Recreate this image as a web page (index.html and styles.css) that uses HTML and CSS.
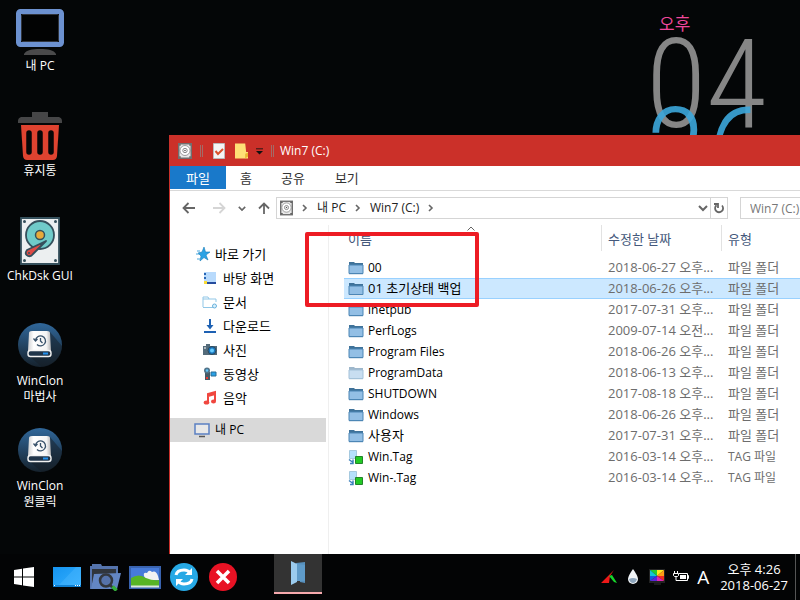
FILE: index.html
```html
<!DOCTYPE html>
<html lang="ko">
<head>
<meta charset="utf-8">
<meta name="viewport" content="width=device-width, initial-scale=1">
<title>Win7 (C:)</title>
<link rel="stylesheet" href="styles.css">
</head>
<body>
<svg class="defs" aria-hidden="true">
  <defs>
    <linearGradient id="g-clon" x1="0" y1="0" x2="0" y2="1"><stop offset="0" stop-color="#30679a"/><stop offset="1" stop-color="#16222d"/></linearGradient>
    <linearGradient id="g-disk" x1="0" y1="0" x2="1" y2="0"><stop offset="0" stop-color="#cfd0d2"/><stop offset=".25" stop-color="#fff"/><stop offset=".8" stop-color="#f4f4f4"/><stop offset="1" stop-color="#b5b5b7"/></linearGradient>
    <linearGradient id="g-desk" x1="0" y1="0" x2="1" y2="1"><stop offset="0" stop-color="#1594f0"/><stop offset="1" stop-color="#35b0ff"/></linearGradient>
  </defs>
  <symbol id="folder" viewBox="0 0 16 14">
    <path d="M1 2V1h5l1 1h8v2H1z" fill="#3f7299"/>
    <path d="M1 4h14v8.500H1z" fill="#93bfe5" stroke="#4c86b5"/>
    <path d="M1 13.500h14" stroke="#dbe6ef"/>
  </symbol>
  <symbol id="tag" viewBox="0 0 16 16">
    <path d="M1.500 1.500h7v8h-7z" fill="#b5e0fc" stroke="#a5c9df"/>
    <path d="M7.500 7.500h7v7h-7z" fill="#22c925" stroke="#23832a"/>
    <path d="M1 10.500l4 3M5 10.500v4H2" fill="none" stroke="#3f83bd" stroke-width="1.500"/>
  </symbol>
  <symbol id="drive" viewBox="0 0 14 16">
    <path d="M0 0h14v16H0z" fill="#6f6f6f"/>
    <path d="M1.500 1.500h11v13h-11z" fill="#e9e9e9"/>
    <circle cx="7" cy="7.500" r="5" fill="#fff" stroke="#777" stroke-width=".7"/>
    <circle cx="7" cy="7.500" r="2.200" fill="none" stroke="#888"/>
    <circle cx="7" cy="7.500" r=".8" fill="#555"/>
    <path d="M1 2h2M11 2h2M1 14h2M11 14h2" stroke="#555"/>
  </symbol>
  <symbol id="chev" viewBox="0 0 6 8"><path d="M1 1l3 3-3 3" fill="none" stroke="#666" stroke-width="1.600"/></symbol>
  <symbol id="chev-down" viewBox="0 0 10 8"><path d="M1 2l4 4 4-4" fill="none" stroke="#666" stroke-width="2"/></symbol>
  <symbol id="winclon" viewBox="0 0 48 48">
    <circle cx="24" cy="22" r="22" fill="url(#g-clon)"/>
    <path d="M34 9l12 14c0 10-8 20-20 21L13 33z" fill="#151d26" opacity=".5"/>
    <path d="M16 8h15q3 0 3 2l1 18H12l1-18q0-2 3-2z" fill="url(#g-disk)"/>
    <rect x="12" y="27.500" width="23" height="6" rx="2.500" fill="#20354a" stroke="#f2f2f2" stroke-width="1.400"/>
    <path d="M27 30.500h5" stroke="#2492ee" stroke-width="2"/>
    <path d="M19.500 17.500a5 5 0 1 1 1.500 4M24.500 15V18l2 2M17.500 15.500l2 2.500 2-2" fill="none" stroke="#365069" stroke-width="1.300"/>
  </symbol>
</svg>

<main class="desktop">
  <nav class="shortcuts" aria-label="바탕 화면">
    <a class="shortcut" href="#">
      <svg class="pic" viewBox="0 0 48 48"><rect x="2.500" y="3.500" width="43" height="33" rx="2" fill="#020303" stroke="#6c91d0" stroke-width="5"/><rect x="5.500" y="6.500" width="37" height="27" rx="1" fill="none" stroke="#30343c"/><path d="M8 46c2-4 8-5 16-5s14 1 16 5v1H8z" fill="#4a4a4b"/></svg>
      <span>내 PC</span>
    </a>
    <a class="shortcut" href="#">
      <svg class="pic" viewBox="0 0 48 48"><path d="M2 10V8q0-3 3-4h11V-1h16v5h11q3 1 3 4v2z" fill="#464647"/><path d="M5 12h38l-2 31q-.5 4-4 4H11q-3.500 0-4-4z" fill="#df4330"/><path d="M13 20v19M24 20v19M35 20v19" stroke="#060708" stroke-width="5.500" stroke-linecap="round"/></svg>
      <span>휴지통</span>
    </a>
    <a class="shortcut" href="#">
      <svg class="pic" viewBox="0 0 48 48"><path d="M5 0h38v46H5z" fill="#eceff0" stroke="#35505c" stroke-width="1.800"/><circle cx="24" cy="17" r="14" fill="#70cbc9" stroke="#35505c" stroke-width="1.800"/><circle cx="24" cy="17" r="4.500" fill="#e8aa3a" stroke="#35505c" stroke-width="1.500"/><path d="M30 23L11 32q-3 4 1 6 3 1 5-2z" fill="#df4b45" stroke="#35505c" stroke-width="1.800" stroke-linejoin="round"/><circle cx="13" cy="35" r="1" fill="#35505c"/><g fill="#35505c"><circle cx="8.500" cy="3.500" r="1.500"/><circle cx="39.500" cy="3.500" r="1.500"/><circle cx="8.500" cy="42.500" r="1.500"/><circle cx="39.500" cy="42.500" r="1.500"/></g></svg>
      <span>ChkDsk GUI</span>
    </a>
    <a class="shortcut" href="#"><svg class="pic"><use href="#winclon"/></svg><span>WinClon<br>마법사</span></a>
    <a class="shortcut" href="#"><svg class="pic"><use href="#winclon"/></svg><span>WinClon<br>원클릭</span></a>
  </nav>

  <div class="clock">
    <span class="clock-half">오후</span>
    <span class="clock-hour">04</span>
    <span class="clock-minute">26</span>
  </div>

  <section class="window">
    <header class="titlebar">
      <svg class="t-drive"><use href="#drive"/></svg>
      <i class="bar"></i>
      <svg class="t-doc" viewBox="0 0 12 16"><path d="M.5.500h11v15H.5z" fill="#f5f5f5" stroke="#bbb"/><path d="M2.500 8L5 11l5-5" fill="none" stroke="#d9532c" stroke-width="2"/></svg>
      <svg class="t-folder" viewBox="0 0 14 16"><path d="M0 0h11l1 9h2v7H0z" fill="#ffdf76"/><path d="M11 11l3-1v4l-3 2z" fill="#e9b52f"/></svg>
      <svg class="t-menu" viewBox="0 0 8 8"><path d="M0 1.500h8" stroke="#111"/><path d="M0 4h8L4 8z" fill="#111"/></svg>
      <i class="bar"></i>
      <h1>Win7 (C:)</h1>
    </header>
    <div class="tabs">
      <button class="tab tab-file" type="button">파일</button>
      <button class="tab" type="button">홈</button>
      <button class="tab" type="button">공유</button>
      <button class="tab" type="button">보기</button>
    </div>
    <div class="navbar">
      <div class="arrows">
        <button type="button" aria-label="뒤로"><svg viewBox="0 0 14 12"><path d="M13 6H2M6.500 1L1.500 6l5 5" fill="none" stroke="#666" stroke-width="1.800"/></svg></button>
        <button type="button" aria-label="앞으로"><svg viewBox="0 0 14 12"><path d="M1 6h11M7.500 1l5 5-5 5" fill="none" stroke="#d5d5d5" stroke-width="1.800"/></svg></button>
        <button class="recent" type="button" aria-label="최근 위치"><svg viewBox="0 0 10 8"><use href="#chev-down"/></svg></button>
        <button type="button" aria-label="위로"><svg viewBox="0 0 12 12"><path d="M6 12V2M1 6.500l5-5 5 5" fill="none" stroke="#666" stroke-width="1.800"/></svg></button>
      </div>
      <div class="address">
        <svg class="a-drive"><use href="#drive"/></svg>
        <svg class="chev"><use href="#chev"/></svg>
        <a href="#">내 PC</a>
        <svg class="chev"><use href="#chev"/></svg>
        <a href="#">Win7 (C:)</a>
        <svg class="chev"><use href="#chev"/></svg>
        <button class="drop" type="button" aria-label="이전 위치"><svg viewBox="0 0 10 8"><use href="#chev-down"/></svg></button>
        <button class="reload" type="button" aria-label="새로 고침"><svg viewBox="0 0 12 12"><path d="M9 3.500a4 4 0 1 1-5.500-.3M1 2h4v4" fill="none" stroke="#666" stroke-width="1.800"/></svg></button>
      </div>
      <input class="search" type="search" aria-label="검색" placeholder="Win7 (C:) 검색">
    </div>
    <div class="content">
      <nav class="side" aria-label="탐색">
        <a class="side-item top" href="#"><svg viewBox="0 0 16 16"><path d="M9 1l1.500 5L15 6l-4 3 2 5-4-2.500L5 15l1-5-3-3 4-1z" fill="#2ba2e4" stroke="#187cb9" stroke-width=".6"/><path d="M2 5h3M1 8h3M2 13h3" stroke="#4aa7dc"/></svg>바로 가기</a>
        <a class="side-item" href="#"><svg viewBox="0 0 16 16"><path d="M2 2h12v10H2z" fill="#b8dafc"/><path d="M2 12h12v2H2z" fill="#244b9d"/><path d="M2 3h2v2H2zM2 7h2v2H2z" fill="#2765b5"/><path d="M2 11h3v3H2z" fill="#fbdc36"/></svg>바탕 화면</a>
        <a class="side-item" href="#"><svg viewBox="0 0 16 16"><path d="M1 13V3h5l1 2h7v3M1 5h6M1 13.500h10" fill="none" stroke="#91c7e7"/><circle cx="12.500" cy="12" r="2" fill="#d9f0fc" stroke="#68b0db"/></svg>문서</a>
        <a class="side-item" href="#"><svg viewBox="0 0 16 16"><path d="M8 1v7M2 14h12" stroke="#1e61b3" stroke-width="2"/><path d="M4.500 7h7L8 11.500z" fill="#1e61b3"/></svg>다운로드</a>
        <a class="side-item" href="#"><svg viewBox="0 0 16 16"><path d="M1 4h3V2h4v2h7v9H1z" fill="#546b7a"/><circle cx="10" cy="8.500" r="4" fill="#1976bd" stroke="#304858"/><circle cx="10" cy="8.500" r="2" fill="#65cbff"/><path d="M2 6h2" stroke="#fff"/></svg>사진</a>
        <a class="side-item" href="#"><svg viewBox="0 0 16 16"><path d="M3 6h5v8H3z" fill="#465965"/><circle cx="5" cy="4.500" r="3" fill="#52748a"/><circle cx="5" cy="4.500" r="1.300" fill="#62c7fa"/><path d="M9 6h5v4H9z" fill="#2aa1e6" stroke="#286d96"/><path d="M4 11h2v2H4z" fill="#ed3932"/></svg>동영상</a>
        <a class="side-item" href="#"><svg viewBox="0 0 16 16"><path d="M6 12V4l7-2v9M6 6l7-2" fill="none" stroke="#f0473f" stroke-width="2"/><ellipse cx="4.500" cy="12.500" rx="2.800" ry="2" fill="#f0473f"/><ellipse cx="11.500" cy="11.500" rx="2.500" ry="2" fill="#f0473f"/></svg>음악</a>
        <a class="side-item pc" href="#"><svg viewBox="0 0 16 16"><path d="M1 2h14v10H1z" fill="#e8e8e8" stroke="#5b80c2" stroke-width="1.500"/><path d="M5 14.500h6" stroke="#555" stroke-width="1.500"/></svg>내 PC</a>
      </nav>
      <div class="files">
        <table>
          <colgroup><col><col class="c-date"><col class="c-type"></colgroup>
          <thead><tr><th>이름<svg class="sort" viewBox="0 0 8 5"><path d="M.5 4.500L4 1l3.500 3.500" fill="none" stroke="#666"/></svg></th><th>수정한 날짜</th><th>유형</th></tr></thead>
          <tbody>
            <tr><td><svg><use href="#folder"/></svg>00</td><td>2018-06-27 오후...</td><td>파일 폴더</td></tr>
            <tr class="selected"><td class="ko"><svg><use href="#folder"/></svg>01 초기상태 백업</td><td>2018-06-26 오후...</td><td>파일 폴더</td></tr>
            <tr><td><svg><use href="#folder"/></svg>inetpub</td><td>2017-07-31 오후...</td><td>파일 폴더</td></tr>
            <tr><td><svg><use href="#folder"/></svg>PerfLogs</td><td>2009-07-14 오전...</td><td>파일 폴더</td></tr>
            <tr><td><svg><use href="#folder"/></svg>Program Files</td><td>2018-06-26 오후...</td><td>파일 폴더</td></tr>
            <tr class="faded"><td><svg><use href="#folder"/></svg>ProgramData</td><td>2018-06-13 오후...</td><td>파일 폴더</td></tr>
            <tr><td><svg><use href="#folder"/></svg>SHUTDOWN</td><td>2017-08-18 오후...</td><td>파일 폴더</td></tr>
            <tr><td><svg><use href="#folder"/></svg>Windows</td><td>2018-06-26 오후...</td><td>파일 폴더</td></tr>
            <tr><td class="ko"><svg><use href="#folder"/></svg>사용자</td><td>2017-07-31 오후...</td><td>파일 폴더</td></tr>
            <tr><td><svg><use href="#tag"/></svg>Win.Tag</td><td>2016-03-14 오후...</td><td class="small">TAG 파일</td></tr>
            <tr><td><svg><use href="#tag"/></svg>Win-.Tag</td><td>2016-03-14 오후...</td><td class="small">TAG 파일</td></tr>
          </tbody>
        </table>
      </div>
    </div>
  </section>
  <div class="marker"></div>
</main>

<footer class="taskbar">
  <div class="apps">
    <button class="start" type="button" aria-label="시작"><svg viewBox="0 0 20 20"><path d="M0 3l8-1.200V9.500H0zM9 1.600L20 0v9.500H9zM0 10.500h8v7.700L0 17zM9 10.500h11V20L9 18.400z" fill="#fff"/></svg></button>
    <button type="button" aria-label="바탕 화면 보기"><svg viewBox="0 0 32 28"><path d="M2 4h28v20H2z" fill="url(#g-desk)"/><path d="M8 22L25 4h5v18z" fill="#55bdff" opacity=".35"/><path d="M2 23h28" stroke="#0873c5" stroke-width="1.500"/><path d="M3 22.500h1M24 22.500h1M26 22.500h1M28 22.500h1" stroke="#fff"/></svg></button>
    <button type="button" aria-label="파일 찾기"><svg viewBox="0 0 32 28"><path d="M0 3h2V1h9l1 2h16v9H4v14H0z" fill="#5574ad"/><path d="M2 6h24v14H2z" fill="#30353c"/><path d="M4 11l27-1-4 16H1z" fill="#6386c3"/><circle cx="16" cy="17.500" r="6" fill="#5673aa" stroke="#33373d" stroke-width="2.500"/><path d="M20 22l3 3" stroke="#33373d" stroke-width="2.500"/><path d="M22.500 23.500l4 4" stroke="#35ad3b" stroke-width="3.500"/></svg></button>
    <button type="button" aria-label="사진 보기"><svg viewBox="0 0 32 28"><path d="M1 4h30v21H1z" fill="#477bd9" stroke="#3963af" stroke-width="2"/><path d="M15 13q-1-4 3-3 2-4 5-1 4-2 6 4l1 4H17z" fill="#f2f2f2"/><path d="M2 15q8-5 15 0 7 3 13 2v6H2z" fill="#57b424"/><path d="M2 23.500h28" stroke="#dbe9dc" stroke-width="2"/></svg></button>
    <button type="button" aria-label="동기화"><svg viewBox="0 0 32 28"><circle cx="16" cy="14" r="14" fill="#27a9e5"/><path d="M8 12q1-5 8-5 4 0 6 3M24 16q-1 5-8 5-4 0-6-3" fill="none" stroke="#fff" stroke-width="3"/><path d="M24 5v7h-7zM8 23v-7h7z" fill="#fff"/></svg></button>
    <button type="button" aria-label="닫기"><svg viewBox="0 0 32 28"><circle cx="16" cy="14" r="14" fill="#e81224"/><path d="M10 8l12 12M22 8L10 20" stroke="#fff" stroke-width="3.500"/></svg></button>
  </div>
  <button class="running" type="button" aria-label="Win7 (C:)"><svg viewBox="0 0 18 26"><path d="M7 3l9-1v21l-5-1V6H7z" fill="#5790bd"/><path d="M2 1l6 3v18l-6 3z" fill="#9bcbee"/><path d="M8 4l8 1v16H8z" fill="#5f9bc9"/></svg></button>
  <div class="tray">
    <svg viewBox="0 0 16 16"><path d="M0 14L13 1 9 7l-1 7z" fill="#ee1818"/><path d="M8 7l3-1 5 8-3-1z" fill="#17d52b"/></svg>
    <svg viewBox="0 0 16 16"><path d="M8 0q5 7 5 10a5 5 0 0 1-10 0q0-3 5-10z" fill="#f1f4f7"/><path d="M4 10q4-2 8 0-1 4-4 4t-4-4z" fill="#8ea6bd"/></svg>
    <svg viewBox="0 0 16 16"><path d="M0 0h16v14H0z" fill="#222"/><path d="M1 1h7v6z" fill="#23cc33"/><path d="M1 1v6h7z" fill="#15c8d3"/><path d="M1 7h7l-7 5z" fill="#155bdc"/><path d="M1 12h7V7z" fill="#5b27d8"/><path d="M8 1h7L8 7z" fill="#ffe91f"/><path d="M15 1v6H8z" fill="#ff9c14"/><path d="M8 7h7v5z" fill="#ee2b23"/><path d="M8 7v5h7z" fill="#e023b8"/><path d="M5 15h7" stroke="#333"/></svg>
    <svg viewBox="0 0 16 16"><path d="M6 4.500h8.500v7H5M14.500 6.500h1v3h-1M1.500 2v2.500M4.500 2v2.500M.5 4.500h5v2l-1 1h-3l-1-1zM3 7.500v4h2" fill="none" stroke="#fff"/><path d="M7 6h6v4H7z" fill="#fff"/></svg>
    <span class="ime">A</span>
  </div>
  <time class="when" datetime="2018-06-27T16:26"><span>오후 4:26</span><span>2018-06-27</span></time>
</footer>
</body>
</html>
```
FILE: styles.css
```css
* { box-sizing: border-box; }

body {
  margin: 0;
  height: 100vh;
  display: flex;
  flex-direction: column;
  overflow: hidden;
  background: #040607;
  color: #000;
  font: 12px/16px "Open Sans", "Noto Sans CJK KR", sans-serif;
}

a { color: inherit; text-decoration: none; }
button { padding: 0; border: 0; background: none; color: inherit; font: inherit; }
svg { display: block; flex: none; }
.defs { position: absolute; width: 0; height: 0; }

.desktop { position: relative; flex: 1; min-height: 0; overflow: hidden; }

.shortcuts {
  width: 80px;
  padding-top: 8px;
  display: grid;
  grid-auto-rows: 105px;
}
.shortcut {
  display: flex;
  flex-direction: column;
  align-items: center;
  gap: 2px;
  color: #fff;
  text-align: center;
}
.pic { width: 48px; height: 48px; overflow: visible; }

.clock { position: absolute; top: 16px; left: 652px; }
.clock-half { padding-left: 7px; font-size: 17px; color: #f0479b; }
.clock-hour, .clock-minute {
  position: absolute;
  left: -6px;
  font: 300 124px/94px "Roboto Condensed Light", "Roboto Condensed", "Liberation Sans Narrow", sans-serif;
}
.clock-hour { top: 22px; color: #868686; }
.clock-minute { top: 91px; color: #3ca7db; opacity: .9; }

.window {
  position: absolute;
  top: 135px;
  right: -120px;
  bottom: 0;
  left: 169px;
  display: flex;
  flex-direction: column;
  border-left: 1px solid #c9302a;
  background: #fff;
}

.titlebar {
  height: 31px;
  padding-left: 8px;
  display: flex;
  align-items: center;
  background: #cb3029;
  color: #fff;
}
.titlebar h1 { margin: 0; font-size: 12px; font-weight: 400; }
.bar { width: 3px; height: 12px; margin: 0 6px 0 8px; border: 1px solid #a36b67; border-width: 0 1px; }
.t-drive { width: 14px; height: 16px; }
.t-doc { width: 12px; height: 16px; margin-left: 4px; }
.t-folder { width: 13px; height: 16px; margin: 0 8px 0 10px; }
.t-menu { width: 7px; height: 8px; }

.tabs { display: flex; height: 25px; border-bottom: 1px solid #d9d9d9; color: #333; }
.tab { height: 23px; padding: 0 15px; font-size: 13px; }
.tab:nth-child(2) { padding: 0 14px; }
.tab-file { width: 56px; background: #1979ca; color: #fff; }

.navbar { height: 34px; display: flex; align-items: center; }
.arrows { width: 106px; padding-left: 12px; display: flex; align-items: center; gap: 16px; }
.arrows button svg { width: 14px; height: 12px; }
.arrows .recent { margin: 0 -5px 0 -4px; }
.arrows .recent svg { width: 8px; height: 7px; }
.address {
  width: 452px;
  height: 22px;
  padding-left: 3px;
  display: flex;
  align-items: center;
  border: 1px solid #d5d5d5;
  color: #222;
}
.a-drive { width: 13px; height: 16px; }
.chev { width: 6px; height: 8px; margin: 0 9px; }
.drop { margin-left: auto; }
.drop svg { width: 10px; height: 8px; }
.reload { height: 20px; margin-left: 2px; padding: 0 2px; border-left: 1px solid #d5d5d5; }
.reload svg { width: 12px; height: 12px; }
.search {
  flex: 1;
  min-width: 0;
  height: 22px;
  margin: 0 12px;
  padding: 0 9px;
  border: 1px solid #d5d5d5;
  border-radius: 0;
  background: #fff;
  font: inherit;
}
.search::placeholder { color: #777; }

.content { flex: 1; min-height: 0; display: flex; }
.side { width: 156px; padding-top: 17px; }
.side-item {
  height: 24px;
  padding-left: 32px;
  display: flex;
  align-items: center;
  gap: 5px;
  font-size: 13px;
}
.side-item.top { padding-left: 25px; gap: 4px; }
.side-item.pc { margin-top: 8px; padding-left: 24px; background: #d9d9d9; font-size: 12px; }
.side-item svg { width: 16px; height: 16px; }

.files { flex: 1; margin-left: 2px; padding-left: 15px; border-left: 1px solid #efefef; }
table { width: 100%; border-collapse: collapse; table-layout: fixed; font-size: 13px; }
.c-date { width: 120px; }
.c-type { width: 199px; }
th {
  position: relative;
  height: 32px;
  padding: 0 0 4px 7px;
  color: #44587b;
  font-weight: 400;
  text-align: left;
}
th:first-child { padding-left: 4px; }
th + th::before { content: ""; position: absolute; top: 0; bottom: 6px; left: 0; border-left: 1px solid #e2e2e2; }
.sort { position: absolute; top: 1px; right: 126px; width: 8px; height: 5px; }
td {
  height: 21px;
  padding: 0 4px 0 7px;
  overflow: hidden;
  color: #6d6d6d;
  line-height: 19px;
  text-overflow: ellipsis;
  white-space: nowrap;
}
td:first-child { padding-left: 4px; display: flex; align-items: center; gap: 4px; color: #000; font-size: 12px; }
td.ko:first-child { font-size: 13px; }
td.small { font-size: 12px; }
td svg { width: 16px; height: 16px; }
.selected td { background: #cce8ff; box-shadow: inset 0 1px #99d1ff, inset 0 -1px #99d1ff; }
.faded svg { opacity: .5; }

.marker {
  position: absolute;
  top: 232px;
  left: 305px;
  width: 174px;
  height: 75px;
  border: 4px solid #ed1c24;
  border-radius: 2px;
}

.taskbar { position: relative; height: 46px; display: flex; color: #fff; background: #030405; }
.apps { width: 274px; padding-left: 14px; display: flex; align-items: center; gap: 7px; }
.apps svg { width: 32px; height: 28px; }
.apps .start { margin-right: 10px; }
.apps .start svg { width: 20px; height: 20px; }
.running { width: 48px; height: 40px; padding-left: 15px; background: #333; border-bottom: 2px solid #f6a9ad; }
.running svg { width: 18px; height: 26px; }
.tray { margin-left: auto; display: flex; align-items: center; gap: 8px; }
.tray svg { width: 16px; height: 16px; }
.ime { font-size: 19px; }
.when {
  margin: 0 4px 0 7px;
  padding: 0 7px 0 4px;
  display: flex;
  flex-direction: column;
  justify-content: center;
  border-right: 1px solid #555;
  font-size: 13px;
  text-align: center;
}
```
